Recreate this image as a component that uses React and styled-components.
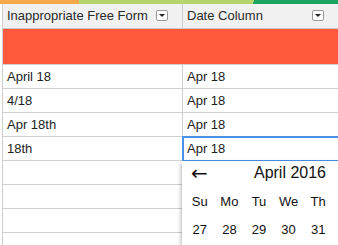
import React from 'react';
import styled, { createGlobalStyle } from 'styled-components';

const GlobalStyle = createGlobalStyle`
  * { box-sizing: border-box; }
  html, body {
    margin: 0;
    padding: 0;
    background: #fff;
    font-family: "Liberation Sans", Arial, sans-serif;
    color: #222;
    overflow: hidden;
  }
`;

const Page = styled.div`
  width: 338px;
  height: 245px;
  position: relative;
  overflow: hidden;
`;

const Stripe = styled.div`
  height: 4px;
  background: linear-gradient(
    100deg,
    #f6a84b 0 78px,
    #b6d56c 78px 250px,
    #1ba462 250px
  );
`;

const Table = styled.div`
  display: grid;
  grid-template-columns: 180px 156px;
  margin-left: 2px;
  border-left: 1px solid #cfcfcf;
`;

const HeadCell = styled.div`
  height: 25px;
  display: flex;
  align-items: center;
  justify-content: space-between;
  padding: 0 14px 0 4px;
  background: #f1f1f1;
  border-bottom: 1px solid #c8c8c8;
  border-right: 1px solid #cfcfcf;
  font-size: 13px;
  line-height: 24px;
  color: #2a2a2a;
  white-space: nowrap;
`;

const Dropdown = styled.span`
  width: 12px;
  height: 11px;
  border: 1px solid #999;
  border-radius: 2px;
  background: #fff;
  display: flex;
  align-items: center;
  justify-content: center;
  margin-top: -1px;

  &::after {
    content: '';
    border-left: 3px solid transparent;
    border-right: 3px solid transparent;
    border-top: 3px solid #222;
  }
`;

const Highlight = styled.div`
  grid-column: 1 / span 2;
  height: 36px;
  background: #ff5a3d;
  border-bottom: 1px solid #cfcfcf;
`;

const Cell = styled.div`
  height: 24px;
  padding-left: 4px;
  font-size: 13px;
  line-height: 24px;
  border-bottom: 1px solid #cfcfcf;
  border-right: 1px solid #cfcfcf;
  white-space: nowrap;
  position: relative;
  outline: ${(p) => (p.$active ? '2px solid #4a90e8' : 'none')};
  outline-offset: -1px;
  z-index: ${(p) => (p.$active ? 2 : 0)};
`;

const Calendar = styled.div`
  position: absolute;
  left: 182px;
  top: 161px;
  width: 160px;
  height: 90px;
  background: #fff;
  box-shadow: -1px 2px 4px rgba(0, 0, 0, 0.28);
  padding-left: 3px;
  overflow: hidden;
  z-index: 3;
`;

const CalTitle = styled.div`
  height: 24px;
  display: flex;
  justify-content: space-between;
  align-items: center;
  padding: 0 16px 0 6px;
  font-size: 16px;
  line-height: 24px;
  color: #111;
`;

const Arrow = styled.span`
  font-family: "DejaVu Sans", sans-serif;
  font-size: 20px;
  line-height: 24px;
`;

const DayGrid = styled.div`
  display: grid;
  grid-template-columns: repeat(5, 29.6px);
  margin-top: 3px;
`;

const Day = styled.div`
  text-align: center;
  font-size: 13px;
  line-height: 28px;
  color: #111;
`;

const rows = [
  ['April 18', 'Apr 18'],
  ['4/18', 'Apr 18'],
  ['Apr 18th', 'Apr 18'],
  ['18th', 'Apr 18'],
  ['', ''],
  ['', ''],
  ['', ''],
  ['', ''],
];

// only the days that fit inside the visible part of the popup
const weekdays = ['Su', 'Mo', 'Tu', 'We', 'Th'];
const dates = ['27', '28', '29', '30', '31'];

export default function App() {
  return (
    <Page>
      <GlobalStyle />
      <Stripe />
      <Table>
        <HeadCell>
          Inappropriate Free Form
          <Dropdown />
        </HeadCell>
        <HeadCell>
          Date Column
          <Dropdown />
        </HeadCell>
        <Highlight />
        {rows.map(([a, b], i) => (
          <React.Fragment key={i}>
            <Cell>{a}</Cell>
            <Cell $active={i === 3}>{b}</Cell>
          </React.Fragment>
        ))}
      </Table>
      <Calendar>
        <CalTitle>
          <Arrow>←</Arrow>
          <span>April 2016</span>
        </CalTitle>
        <DayGrid>
          {weekdays.map((d) => (
            <Day key={d}>{d}</Day>
          ))}
          {dates.map((d) => (
            <Day key={d}>{d}</Day>
          ))}
        </DayGrid>
      </Calendar>
    </Page>
  );
}
